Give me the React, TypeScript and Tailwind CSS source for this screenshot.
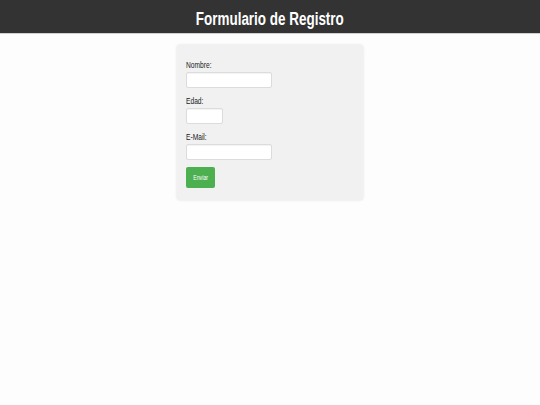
export default function App() {
  return (
    <div className="min-h-[405px] bg-[#fdfdfd] font-['Liberation_Sans',Arial,sans-serif]">
      {/* Header */}
      <header className="h-[34px] bg-[#333] border-b border-[#cfcfcf] pt-[8px] text-center">
        <h1 className="inline-block text-[18.7px] leading-[20px] font-bold text-white scale-x-[0.72] origin-center whitespace-nowrap">
          Formulario de Registro
        </h1>
      </header>

      {/* Form card */}
      <main className="flex justify-center pt-[11px]">
        <form
          className="w-[186px] bg-[#f1f1f1] rounded-[3px] shadow-[0_0_3px_rgba(0,0,0,0.12)] pl-[9px] pr-[9px] pt-[14px] pb-[12px] flex flex-col"
          onSubmit={(e) => e.preventDefault()}
        >
          <label className="h-[11px] leading-[11px] text-[9.5px] text-[#222] mb-[2px]">
            <span className="inline-block origin-left scale-x-[0.7] whitespace-nowrap">Nombre:</span>
          </label>
          <input className="w-[86px] h-[16px] bg-white border border-[#dcdcdc] rounded-[2px] shadow-[inset_0_1px_1px_rgba(0,0,0,0.05)]" />

          <label className="h-[11px] leading-[11px] text-[9.5px] text-[#222] mt-[7px] mb-[2px]">
            <span className="inline-block origin-left scale-x-[0.7] whitespace-nowrap">Edad:</span>
          </label>
          <input className="w-[37px] h-[16px] bg-white border border-[#dcdcdc] rounded-[2px] shadow-[inset_0_1px_1px_rgba(0,0,0,0.05)]" />

          <label className="h-[11px] leading-[11px] text-[9.5px] text-[#222] mt-[7px] mb-[2px]">
            <span className="inline-block origin-left scale-x-[0.7] whitespace-nowrap">E-Mail:</span>
          </label>
          <input className="w-[86px] h-[16px] bg-white border border-[#dcdcdc] rounded-[2px] shadow-[inset_0_1px_1px_rgba(0,0,0,0.05)]" />

          <button
            type="submit"
            className="mt-[7px] w-[29px] h-[21px] bg-[#4caf50] rounded-[2px] text-white text-[7.5px] leading-[21px] text-center"
          >
            <span className="inline-block scale-x-[0.7] whitespace-nowrap">Enviar</span>
          </button>
        </form>
      </main>
    </div>
  );
}
